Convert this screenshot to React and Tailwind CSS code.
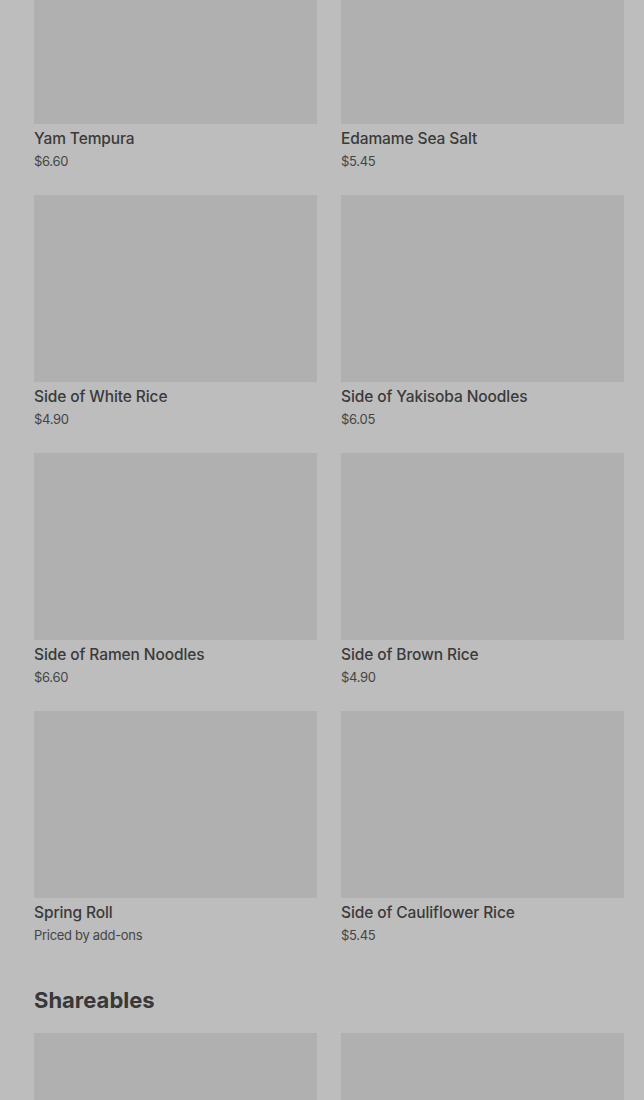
import React from "react";

const items = [
  ["Yam Tempura", "$6.60"],
  ["Edamame Sea Salt", "$5.45"],
  ["Side of White Rice", "$4.90"],
  ["Side of Yakisoba Noodles", "$6.05"],
  ["Side of Ramen Noodles", "$6.60"],
  ["Side of Brown Rice", "$4.90"],
  ["Spring Roll", "Priced by add-ons"],
  ["Side of Cauliflower Rice", "$5.45"],
];

function Card({ name, price }) {
  return (
    <div className="flex flex-col">
      <div className="h-[187px] w-full bg-[#b0b0b0]" />
      <div className="mt-[5px] text-[15.5px] leading-[20px] font-medium text-[#3a3a3a] tracking-[-0.1px]">{name}</div>
      <div className="mt-[3px] text-[13px] leading-[18px] text-[#454545] tracking-[-0.3px]">{price}</div>
    </div>
  );
}

export default function App() {
  return (
    <div
      className="w-[644px] h-[1100px] overflow-hidden bg-[#bdbdbd]"
      style={{ fontFamily: "Inter, 'Noto Sans', sans-serif" }}
    >
      <div className="pl-[34px] pr-[20px] -mt-[63px]">
        <div className="grid grid-cols-2 gap-x-[24px] gap-y-[25px]">
          {items.map(([n, p]) => (
            <Card key={n} name={n} price={p} />
          ))}
        </div>
        <h2 className="mt-[40px] mb-[17px] text-[22px] leading-[32px] font-bold text-[#383838]">
          Shareables
        </h2>
        <div className="grid grid-cols-2 gap-x-[24px]">
          <div className="h-[187px] bg-[#b0b0b0]" />
          <div className="h-[187px] bg-[#b0b0b0]" />
        </div>
      </div>
    </div>
  );
}
